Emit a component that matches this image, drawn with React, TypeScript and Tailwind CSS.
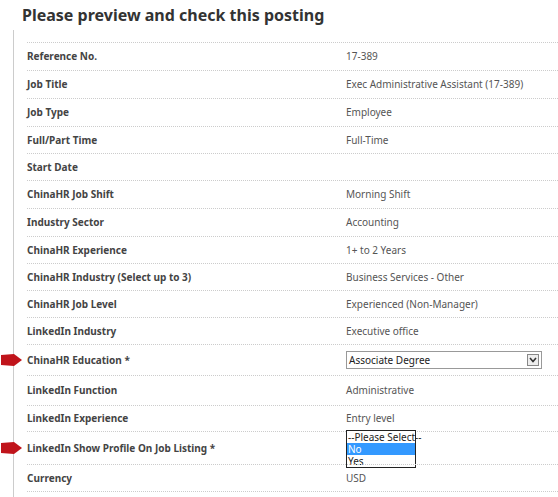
import * as React from "react"

const rows: { label: string; value?: string; h: number; kind?: "select" | "list"; arrow?: boolean }[] = [
  { label: "Reference No.", value: "17-389", h: 28 },
  { label: "Job Title", value: "Exec Administrative Assistant (17-389)", h: 28 },
  { label: "Job Type", value: "Employee", h: 28 },
  { label: "Full/Part Time", value: "Full-Time", h: 27 },
  { label: "Start Date", value: "", h: 27 },
  { label: "ChinaHR Job Shift", value: "Morning Shift", h: 28 },
  { label: "Industry Sector", value: "Accounting", h: 28 },
  { label: "ChinaHR Experience", value: "1+ to 2 Years", h: 27 },
  { label: "ChinaHR Industry (Select up to 3)", value: "Business Services - Other", h: 27 },
  { label: "ChinaHR Job Level", value: "Experienced (Non-Manager)", h: 27 },
  { label: "LinkedIn Industry", value: "Executive office", h: 27 },
  { label: "ChinaHR Education *", h: 31, kind: "select", arrow: true },
  { label: "LinkedIn Function", value: "Administrative", h: 30 },
  { label: "LinkedIn Experience", value: "Entry level", h: 26 },
  { label: "LinkedIn Show Profile On Job Listing *", h: 33, kind: "list", arrow: true },
  { label: "Currency", value: "USD", h: 27 },
]

function Arrow() {
  return (
    <svg width="22" height="18" viewBox="0 0 22 18" className="absolute left-0 top-1/2 -translate-y-1/2">
      <path d="M0 4 L13 3 L21 9 L13 15 L0 14 Z" fill="#c0141b" />
    </svg>
  )
}

export default function App() {
  return (
    <div className="w-[558px] h-[497px] bg-white overflow-hidden font-['Liberation_Sans'] text-[10px] text-[#444]">
      <h1 className="pl-[22px] pt-[3px] h-[30px] text-[16px] font-bold text-[#333]">Please preview and check this posting</h1>
      <div className="ml-[13px] border-l border-[#ccc] pt-[12px]">
        {rows.map((r, i) => (
          <div key={i} className="relative">
            <div className="ml-[13px] border-t border-dotted border-[#ccc] flex items-center" style={{ height: r.h }}>
              <div className="w-[319px] font-bold text-[#444]">{r.label}</div>
              <div className="flex-1 relative text-[#555]">
                {r.kind === "select" && (
                  <div className="w-[196px] h-[18px] border border-[#999] flex items-center justify-between pl-[2px] pr-[2px] text-[#222] text-[10px]">
                    <span>Associate Degree</span>
                    <span className="w-[12px] h-[12px] border border-[#888] bg-[#eee] flex items-center justify-center">
                      <svg width="8" height="6" viewBox="0 0 8 6"><path d="M1 1 L4 4.5 L7 1" stroke="#333" strokeWidth="1.6" fill="none" /></svg>
                    </span>
                  </div>
                )}
                {r.kind === "list" && (
                  <div className="absolute left-0 top-[-18px] w-[70px] border border-[#222] text-[10px] leading-[12px] text-[#222] whitespace-nowrap bg-white">
                    <div className="pl-[1px]">--Please Select--</div>
                    <div className="pl-[1px] bg-[#3399ff] text-white">No</div>
                    <div className="pl-[1px]">Yes</div>
                  </div>
                )}
                {!r.kind && r.value}
              </div>
            </div>
            {r.arrow && (
              <div className="absolute left-[-13px] top-0 bottom-0 w-[22px]"><Arrow /></div>
            )}
          </div>
        ))}
        <div className="ml-[13px] border-t border-dotted border-[#ccc] h-[10px]" />
      </div>
    </div>
  )
}
